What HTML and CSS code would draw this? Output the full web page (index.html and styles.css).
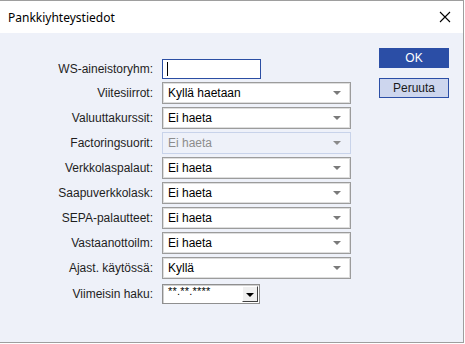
FILE: index.html
```html
<!DOCTYPE html>
<html>
<head>
<meta charset="utf-8">
<link rel="stylesheet" href="styles.css">
</head>
<body>
<div class="window">
  <div class="titlebar">
    <span class="title">Pankkiyhteystiedot</span>
    <svg class="close" width="12" height="12" viewBox="0 0 12 12"><path d="M1 1 L11 11 M11 1 L1 11" stroke="#000" stroke-width="1.1" fill="none"/></svg>
  </div>
  <div class="content">
    <div class="form">
      <label class="lbl">WS-aineistoryhm:</label>
      <div class="input"><span class="caret"></span></div>

      <label class="lbl">Viitesiirrot:</label>
      <div class="select"><span>Kyllä haetaan</span><i class="arrow"></i></div>

      <label class="lbl">Valuuttakurssit:</label>
      <div class="select"><span>Ei haeta</span><i class="arrow"></i></div>

      <label class="lbl">Factoringsuorit:</label>
      <div class="select disabled"><span>Ei haeta</span><i class="arrow"></i></div>

      <label class="lbl">Verkkolaspalaut:</label>
      <div class="select"><span>Ei haeta</span><i class="arrow"></i></div>

      <label class="lbl">Saapuverkkolask:</label>
      <div class="select"><span>Ei haeta</span><i class="arrow"></i></div>

      <label class="lbl">SEPA-palautteet:</label>
      <div class="select"><span>Ei haeta</span><i class="arrow"></i></div>

      <label class="lbl">Vastaanottoilm:</label>
      <div class="select"><span>Ei haeta</span><i class="arrow"></i></div>

      <label class="lbl">Ajast. käytössä:</label>
      <div class="select"><span>Kyllä</span><i class="arrow"></i></div>

      <label class="lbl date-lbl">Viimeisin haku:</label>
      <div class="date"><span class="date-text">**.**.****</span><span class="date-btn"><i class="black-arrow"></i></span></div>
    </div>
    <div class="buttons">
      <button class="btn primary">OK</button>
      <button class="btn secondary">Peruuta</button>
    </div>
  </div>
</div>
</body>
</html>
```
FILE: styles.css
```css
*, *::before, *::after { box-sizing: border-box; }
html, body {
  margin: 0;
  padding: 0;
  background: #ffffff;
}
.window {
  width: 464px;
  height: 343px;
  border-top: 1px solid #9e9e9e;
  border-right: 1px solid #9e9e9e;
  border-bottom: 1px solid #9e9e9e;
  display: flex;
  flex-direction: column;
  font-family: "Liberation Sans", Arial, sans-serif;
}
.titlebar {
  height: 32px;
  flex: none;
  background: #fff;
  display: flex;
  align-items: center;
  justify-content: space-between;
  padding: 0 12px 0 8px;
}
.title {
  font-family: "Noto Sans", "Open Sans", sans-serif;
  font-size: 12px;
  color: #000;
}
.close { display: block; }
.content {
  flex: 1;
  background: #eef1f9;
  display: flex;
  align-items: flex-start;
  padding-top: 26px;
}
.form {
  display: grid;
  grid-template-columns: 153px 189px;
  column-gap: 9px;
  row-gap: 3px;
  align-items: center;
}
.lbl {
  text-align: right;
  font-size: 12px;
  color: #1e1e1e;
  white-space: nowrap;
}
.input {
  width: 99px;
  height: 20px;
  background: #fff;
  border: 1px solid #2b4ea3;
  display: flex;
  align-items: center;
  padding-left: 4px;
}
.caret {
  width: 1px;
  height: 14px;
  background: #000;
}
.select {
  height: 22px;
  background: #fff;
  border: 1px solid #9c9c9c;
  box-shadow: inset 0 0 0 1px #dedede;
  display: flex;
  align-items: center;
  justify-content: space-between;
  padding: 0 9px 0 5px;
  font-size: 12px;
  color: #000;
}
.select.disabled {
  background: #eef1f9;
  border-color: #c8d3ea;
  box-shadow: none;
  color: #8c8c8c;
}
.arrow {
  width: 0;
  height: 0;
  border-left: 4px solid transparent;
  border-right: 4px solid transparent;
  border-top: 4px solid #7a7a7a;
}
.select.disabled .arrow { border-top-color: #8a8a8a; }
.date-lbl { margin-top: 2px; }
.date {
  margin-top: 2px;
  width: 98px;
  height: 20px;
  background: #fff;
  border: 1px solid #8f8f8f;
  box-shadow: inset 1px 1px 0 #d0d0d0;
  display: flex;
  align-items: center;
  justify-content: space-between;
  padding: 0 1px 0 5px;
  font-size: 11px;
  color: #000;
}
.date-text {
  position: relative;
  top: -3px;
  letter-spacing: 0.2px;
}
.date-btn {
  width: 16px;
  height: 16px;
  background: #f0f0f0;
  border-top: 1px solid #fff;
  border-left: 1px solid #fff;
  border-right: 1px solid #404040;
  border-bottom: 1px solid #404040;
  display: flex;
  align-items: center;
  justify-content: center;
}
.black-arrow {
  width: 0;
  height: 0;
  border-left: 4px solid transparent;
  border-right: 4px solid transparent;
  border-top: 4px solid #000;
  margin-top: 1px;
}
.buttons {
  margin-left: 28px;
  margin-top: -11px;
  display: flex;
  flex-direction: column;
  gap: 10px;
}
.btn {
  width: 70px;
  height: 20px;
  font-family: "Liberation Sans", Arial, sans-serif;
  font-size: 12px;
  padding: 0;
  margin: 0;
  cursor: default;
}
.primary {
  background: #2b4ea6;
  color: #fff;
  border: 1px solid #2b4ea6;
}
.secondary {
  background: #cdd6ee;
  color: #1a1a1a;
  border: 1px solid #2b4ea6;
}
```
